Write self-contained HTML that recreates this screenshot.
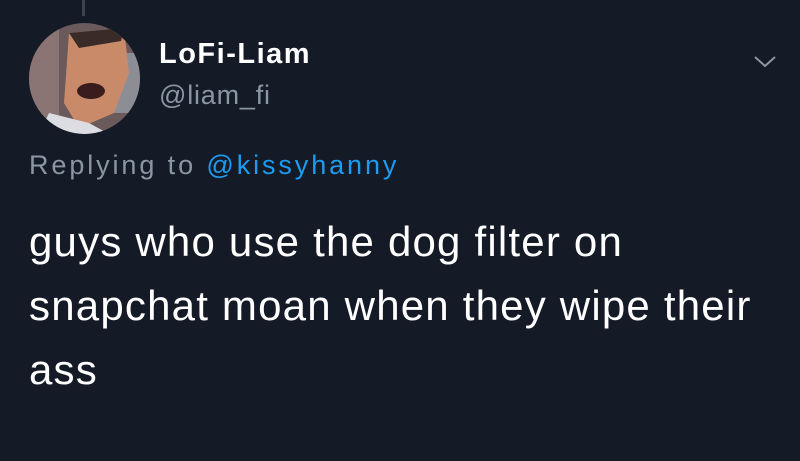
<!DOCTYPE html>
<html><head><style>
body{margin:0;width:800px;height:461px;background:#141b27;font-family:"Liberation Sans",sans-serif;overflow:hidden;position:relative}
.t{position:absolute;white-space:nowrap}
</style></head><body>
<div style="position:absolute;left:82px;top:0;width:3px;height:16px;background:#3a4350"></div>
<svg style="position:absolute;left:29px;top:23px" width="111" height="111" viewBox="0 0 111 111">
<defs><clipPath id="c"><circle cx="55.5" cy="55.5" r="55.5"/></clipPath></defs>
<g clip-path="url(#c)">
<rect width="111" height="111" fill="#6b5a5c"/>
<rect x="0" y="0" width="30" height="111" fill="#8a7474"/>
<rect x="75" y="30" width="40" height="60" fill="#8d8d96"/>
<path d="M40 10 L95 5 L100 50 L85 90 L50 105 L35 80 Z" fill="#c98a6a"/>
<path d="M40 10 L95 5 L92 18 L50 25 Z" fill="#3a2a28"/>
<ellipse cx="62" cy="68" rx="14" ry="8" fill="#3b1c1c"/>
<path d="M20 90 L60 100 L80 111 L10 111Z" fill="#dcdde2"/>
</g></svg>
<div class="t" style="left:159px;top:38px;font-size:29px;font-weight:bold;color:#fff;letter-spacing:1.5px">LoFi-Liam</div>
<div class="t" style="left:159px;top:80px;font-size:27px;color:#8b96a3;letter-spacing:0.8px">@liam_fi</div>
<svg style="position:absolute;left:752px;top:54px" width="26" height="16" viewBox="0 0 26 16"><path d="M3 3 L13 12 L23 3" fill="none" stroke="#8b96a3" stroke-width="2"/></svg>
<div class="t" style="left:29px;top:150px;font-size:27px;color:#8b96a3;letter-spacing:2.9px">Replying to <span style="color:#1d9bf0">@kissyhanny</span></div>
<div class="t" style="left:29px;top:210px;font-size:42px;color:#fff;line-height:64px;letter-spacing:1.2px">guys who use the dog filter on<br>snapchat moan when they wipe their<br>ass</div>
</body></html>
